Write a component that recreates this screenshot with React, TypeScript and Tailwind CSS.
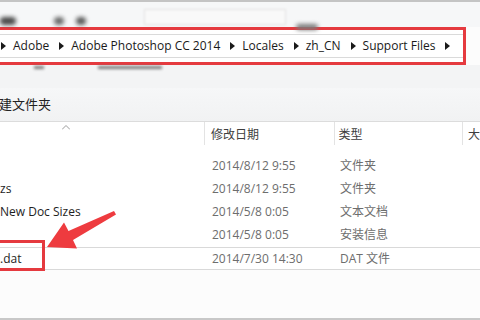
import React from 'react';

const crumbs = ['Adobe', 'Adobe Photoshop CC 2014', 'Locales', 'zh_CN', 'Support Files'];

const rows = [
  { name: '', date: '2014/8/12 9:55', type: '文件夹' },
  { name: 'zs', date: '2014/8/12 9:55', type: '文件夹' },
  { name: 'New Doc Sizes', date: '2014/5/8 0:05', type: '文本文档' },
  { name: '', date: '2014/5/8 0:05', type: '安装信息' },
  { name: '.dat', date: '2014/7/30 14:30', type: 'DAT 文件', boxed: true },
];

const Tri = () => (
  <svg width="5" height="8" viewBox="0 0 5 8" className="shrink-0">
    <path d="M0 0 L5 4 L0 8 Z" fill="#1a1a1a" />
  </svg>
);

export default function App() {
  return (
    <div className="relative w-[480px] h-[320px] overflow-hidden bg-[#fcfcfc] text-[12px] text-[#1e1e1e] font-['Open_Sans','Noto_Sans_CJK_SC',sans-serif] flex flex-col">
      {/* blurred toolbar above the address bar */}
      <div className="h-[27px] shrink-0 border-t-2 border-[#c4c4c4] bg-[#f6f7f8] flex items-end pb-[2px]">
        <span className="w-[16px] h-[8px] rounded bg-[#4a4a4a] blur-[2px]" />
        <span className="ml-[38px] w-[10px] h-[8px] rounded bg-[#6a6a6a] blur-[2px]" />
        <span className="ml-[12px] w-[10px] h-[8px] rounded bg-[#5a5a5a] blur-[2px]" />
        <span className="ml-[58px] w-[142px] h-[16px] border border-[#e2e2e2] bg-[#f9f9f9] blur-[1px]" />
        <span className="ml-[10px] w-[22px] h-[6px] rounded bg-[#7a7a7a] blur-[2px] translate-y-[5px]" />
      </div>

      {/* address bar, outlined in red */}
      <div className="h-[38px] w-[466px] shrink-0 border-y-[3px] border-r-[3px] border-[#e53a3f] bg-white flex flex-col justify-center">
        <div className="h-[24px] border-y border-[#dadada] flex items-center pl-[1px] text-[12px] text-[#1a1a1a]">
          {crumbs.map((c) => (
            <React.Fragment key={c}>
              <Tri />
              <span className="ml-[7px] mr-[10px]">{c}</span>
            </React.Fragment>
          ))}
          <Tri />
        </div>
      </div>

      {/* blurred strip under the address bar */}
      <div className="h-[23px] shrink-0 bg-[#f3f4f5] flex items-start pt-[1px]">
        <span className="ml-[34px] w-[10px] h-[3px] bg-[#7a7a7a] blur-[1.5px]" />
        <span className="ml-[54px] w-[64px] h-[3px] bg-[#7a7a7a] blur-[1.5px]" />
      </div>

      {/* command bar */}
      <div className="h-[34px] shrink-0 bg-gradient-to-b from-[#f6f7f8] to-[#f1f2f3] border-b border-[#dcdcdc] flex items-center pt-[1px] text-[13px] text-[#222]">
        <span className="-ml-[1px]">建文件夹</span>
      </div>

      {/* column headers */}
      <div className="h-[23px] shrink-0 bg-white flex text-[12px] text-[#3d3d3d]">
        <div className="w-[206px] border-r border-[#e3e3e3] flex justify-start">
          <svg width="8" height="5" viewBox="0 0 8 5" className="ml-[62px] mt-[3px]">
            <path d="M0 4.5 L4 0.5 L8 4.5" fill="none" stroke="#9a9a9a" strokeWidth="1" />
          </svg>
        </div>
        <div className="w-[130px] border-r border-[#e3e3e3] pl-[6px] flex items-center pt-[2px]">修改日期</div>
        <div className="w-[129px] border-r border-[#e3e3e3] pl-[4px] flex items-center pt-[2px]">类型</div>
        <div className="pl-[5px] flex items-center pt-[2px]">大</div>
      </div>

      {/* file rows */}
      <div className="flex flex-col pt-[9px] bg-white">
        {rows.map((r, i) => (
          <div
            key={i}
            className={
              'flex items-center ' +
              (r.boxed ? 'h-[23px] mt-[1px] border-y border-[#d9d9d9]' : 'h-[23px]')
            }
          >
            <div className="w-[206px] text-[#1e1e1e]">{r.name}</div>
            <div className="w-[130px] pl-[6px] text-[#6d6d6d]">{r.date}</div>
            <div className="w-[129px] pl-[4px] text-[#6d6d6d]">{r.type}</div>
          </div>
        ))}
      </div>

      <div className="flex-1 bg-[#fcfcfc]" />
      <div className="h-[2px] shrink-0 bg-[#c8c8c8]" />

      {/* annotation: red box and arrow */}
      <div className="absolute left-[-3px] top-[240px] w-[48px] h-[31px] border-[3px] border-[#e53a3f]" />
      <svg className="absolute left-0 top-0" width="480" height="320" viewBox="0 0 480 320">
        <polygon
          points="116,214.5 114,211 68.5,231 64,222.5 47,247 77,248.5 73,240"
          fill="#ee3b3f"
        />
      </svg>
    </div>
  );
}
